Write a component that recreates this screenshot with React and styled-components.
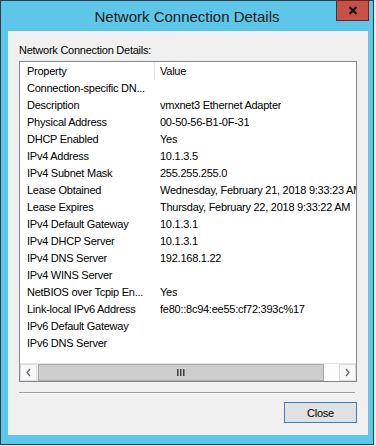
import React from 'react';
import styled, { createGlobalStyle } from 'styled-components';

const GlobalStyle = createGlobalStyle`
  body {
    margin: 0;
    background: #d8eef6;
    font-family: "Liberation Sans", Arial, sans-serif;
  }
`;

const Window = styled.div`
  width: 374px;
  height: 445px;
  box-sizing: border-box;
  background: #5ec7e9;
  border: 1px solid #2d3f48;
  display: flex;
  flex-direction: column;
  position: relative;
`;

const TitleBar = styled.div`
  height: 30px;
  display: flex;
  align-items: center;
  justify-content: center;
  font-size: 15px;
  color: #1b1b1b;
  padding-top: 1px;
  box-sizing: border-box;
`;

const CaptionClose = styled.div`
  position: absolute;
  top: -1px;
  right: 4px;
  width: 33px;
  height: 21px;
  box-sizing: border-box;
  background: #c75049;
  border: 1px solid #5a2a28;
  display: flex;
  align-items: center;
  justify-content: center;
`;

const Client = styled.div`
  flex: 1;
  margin: 0 5px 9px 7px;
  background: #f0f0f0;
  padding: 11px 11px 0 11px;
  display: flex;
  flex-direction: column;
`;

const Label = styled.div`
  font-size: 11px;
  letter-spacing: -0.25px;
  line-height: 16px;
  color: #000;
`;

const ListBox = styled.div`
  margin-top: 3px;
  height: 321px;
  box-sizing: border-box;
  border: 1px solid #828790;
  background: #fff;
  display: flex;
  flex-direction: column;
  overflow: hidden;
`;

const Row = styled.div`
  display: flex;
  height: ${p => (p.$head ? 18 : 17)}px;
  line-height: ${p => (p.$head ? 18 : 17)}px;
  font-size: 11px;
  letter-spacing: -0.25px;
  color: #000;
  white-space: nowrap;
  flex-shrink: 0;
`;

const PropCell = styled.div`
  width: 135px;
  flex-shrink: 0;
  padding-left: 7px;
  box-sizing: border-box;
  overflow: hidden;
  border-right: ${p => (p.$head ? '1px solid #e5e5e5' : '1px solid transparent')};
`;

const ValueCell = styled.div`
  padding-left: 5px;
  overflow: hidden;
`;

const ScrollBar = styled.div`
  margin-top: auto;
  height: 17px;
  display: flex;
  background: #f0f0f0;
  border-top: 1px solid #e4e4e4;
`;

const ArrowButton = styled.div`
  width: 17px;
  flex-shrink: 0;
  box-sizing: border-box;
  border: 1px solid #dcdcdc;
  background: #f8f8f8;
  display: flex;
  align-items: center;
  justify-content: center;
`;

const Thumb = styled.div`
  width: 286px;
  margin-left: 1px;
  box-sizing: border-box;
  background: #cdcdcd;
  border: 1px solid #a9a9a9;
  display: flex;
  align-items: center;
  justify-content: center;
`;

const Track = styled.div`
  flex: 1;
  background: #fdfdfd;
`;

const Separator = styled.div`
  margin-top: 10px;
  margin-right: 2px;
  height: 1px;
  background: #a0a0a0;
  border-bottom: 1px solid #fff;
`;

const Footer = styled.div`
  display: flex;
  justify-content: flex-end;
  margin-top: 8px;
`;

const Button = styled.button`
  width: 73px;
  height: 21px;
  box-sizing: border-box;
  border: 1px solid #3c7fb1;
  background: #e1e1e1;
  font-family: "Liberation Sans", Arial, sans-serif;
  font-size: 11px;
  letter-spacing: -0.25px;
  color: #000;
  padding: 0;
`;

const rows = [
  ['Connection-specific DN...', ''],
  ['Description', 'vmxnet3 Ethernet Adapter'],
  ['Physical Address', '00-50-56-B1-0F-31'],
  ['DHCP Enabled', 'Yes'],
  ['IPv4 Address', '10.1.3.5'],
  ['IPv4 Subnet Mask', '255.255.255.0'],
  ['Lease Obtained', 'Wednesday, February 21, 2018 9:33:23 AM'],
  ['Lease Expires', 'Thursday, February 22, 2018 9:33:22 AM'],
  ['IPv4 Default Gateway', '10.1.3.1'],
  ['IPv4 DHCP Server', '10.1.3.1'],
  ['IPv4 DNS Server', '192.168.1.22'],
  ['IPv4 WINS Server', ''],
  ['NetBIOS over Tcpip En...', 'Yes'],
  ['Link-local IPv6 Address', 'fe80::8c94:ee55:cf72:393c%17'],
  ['IPv6 Default Gateway', ''],
  ['IPv6 DNS Server', ''],
];

const Chevron = ({ left }) => (
  <svg width="7" height="9" viewBox="0 0 7 9">
    <path
      d={left ? 'M5 1 L2 4.5 L5 8' : 'M2 1 L5 4.5 L2 8'}
      fill="none"
      stroke="#606060"
      strokeWidth="1.2"
    />
  </svg>
);

const Grip = () => (
  <svg width="8" height="7" viewBox="0 0 8 7">
    <rect x="0" y="0" width="1.5" height="7" fill="#404040" />
    <rect x="3" y="0" width="1.5" height="7" fill="#404040" />
    <rect x="6" y="0" width="1.5" height="7" fill="#404040" />
  </svg>
);

export default function App() {
  return (
    <>
      <GlobalStyle />
      <Window>
        <TitleBar>Network Connection Details</TitleBar>
        <CaptionClose>
          <svg width="10" height="9" viewBox="0 0 10 9">
            <path d="M1.5 1 L8.5 8 M8.5 1 L1.5 8" stroke="#111" strokeWidth="2.2" />
          </svg>
        </CaptionClose>
        <Client>
          <Label>Network Connection Details:</Label>
          <ListBox>
            <Row $head>
              <PropCell $head>Property</PropCell>
              <ValueCell>Value</ValueCell>
            </Row>
            {rows.map(([k, v]) => (
              <Row key={k}>
                <PropCell>{k}</PropCell>
                <ValueCell>{v}</ValueCell>
              </Row>
            ))}
            <ScrollBar>
              <ArrowButton><Chevron left /></ArrowButton>
              <Thumb><Grip /></Thumb>
              <Track />
              <ArrowButton><Chevron /></ArrowButton>
            </ScrollBar>
          </ListBox>
          <Separator />
          <Footer>
            <Button>Close</Button>
          </Footer>
        </Client>
      </Window>
    </>
  );
}
